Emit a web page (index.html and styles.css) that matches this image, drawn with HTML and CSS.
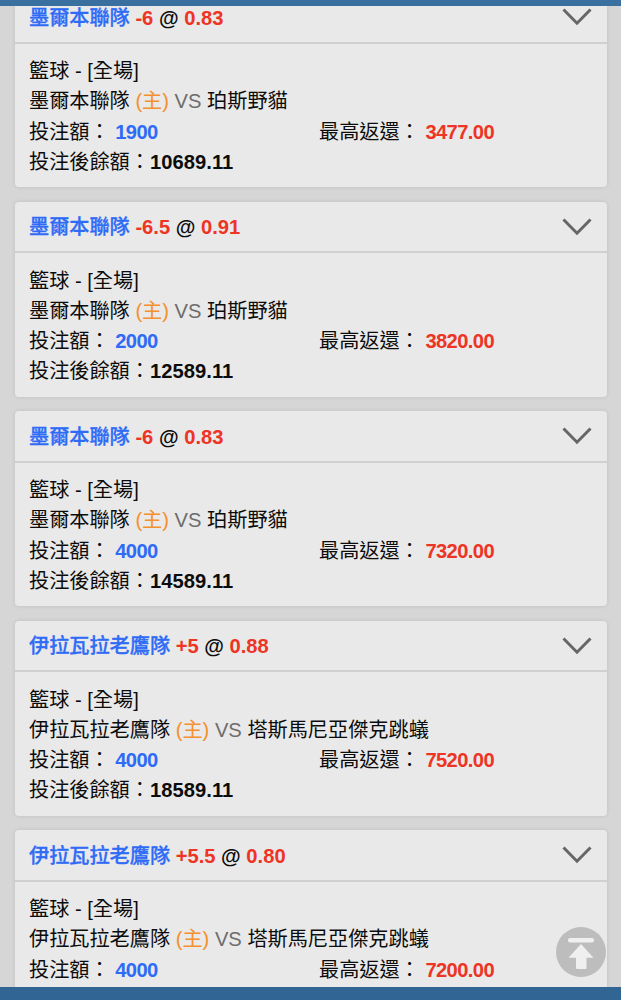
FILE: index.html
```html
<!DOCTYPE html>
<html lang="zh-Hant">
<head>
<meta charset="utf-8">
<title>投注記錄</title>
<link rel="stylesheet" href="styles.css">
</head>
<body>
<div class="app">
  <div class="bar bar-top"></div>
  <main class="list">
    <article class="card">
      <header class="card-head">
        <h2 class="pick"><span class="team">墨爾本聯隊</span> <span class="odds">-6</span> @ <span class="odds">0.83</span></h2>
        <svg class="chevron" viewBox="0 0 30 18"><path d="M1.5 1.5 15 15.2 28.5 1.5"/></svg>
      </header>
      <div class="card-body">
        <p>籃球 - [全場]</p>
        <p>墨爾本聯隊 <span class="home">(主)</span> <span class="vs">VS</span> 珀斯野貓</p>
        <div class="amounts"><p>投注額： <b class="stake">1900</b></p><p>最高返還： <b class="payout">3477.00</b></p></div>
        <p>投注後餘額：<b class="balance">10689.11</b></p>
      </div>
    </article>
    <article class="card">
      <header class="card-head">
        <h2 class="pick"><span class="team">墨爾本聯隊</span> <span class="odds">-6.5</span> @ <span class="odds">0.91</span></h2>
        <svg class="chevron" viewBox="0 0 30 18"><path d="M1.5 1.5 15 15.2 28.5 1.5"/></svg>
      </header>
      <div class="card-body">
        <p>籃球 - [全場]</p>
        <p>墨爾本聯隊 <span class="home">(主)</span> <span class="vs">VS</span> 珀斯野貓</p>
        <div class="amounts"><p>投注額： <b class="stake">2000</b></p><p>最高返還： <b class="payout">3820.00</b></p></div>
        <p>投注後餘額：<b class="balance">12589.11</b></p>
      </div>
    </article>
    <article class="card">
      <header class="card-head">
        <h2 class="pick"><span class="team">墨爾本聯隊</span> <span class="odds">-6</span> @ <span class="odds">0.83</span></h2>
        <svg class="chevron" viewBox="0 0 30 18"><path d="M1.5 1.5 15 15.2 28.5 1.5"/></svg>
      </header>
      <div class="card-body">
        <p>籃球 - [全場]</p>
        <p>墨爾本聯隊 <span class="home">(主)</span> <span class="vs">VS</span> 珀斯野貓</p>
        <div class="amounts"><p>投注額： <b class="stake">4000</b></p><p>最高返還： <b class="payout">7320.00</b></p></div>
        <p>投注後餘額：<b class="balance">14589.11</b></p>
      </div>
    </article>
    <article class="card">
      <header class="card-head">
        <h2 class="pick"><span class="team">伊拉瓦拉老鷹隊</span> <span class="odds">+5</span> @ <span class="odds">0.88</span></h2>
        <svg class="chevron" viewBox="0 0 30 18"><path d="M1.5 1.5 15 15.2 28.5 1.5"/></svg>
      </header>
      <div class="card-body">
        <p>籃球 - [全場]</p>
        <p>伊拉瓦拉老鷹隊 <span class="home">(主)</span> <span class="vs">VS</span> 塔斯馬尼亞傑克跳蟻</p>
        <div class="amounts"><p>投注額： <b class="stake">4000</b></p><p>最高返還： <b class="payout">7520.00</b></p></div>
        <p>投注後餘額：<b class="balance">18589.11</b></p>
      </div>
    </article>
    <article class="card">
      <header class="card-head">
        <h2 class="pick"><span class="team">伊拉瓦拉老鷹隊</span> <span class="odds">+5.5</span> @ <span class="odds">0.80</span></h2>
        <svg class="chevron" viewBox="0 0 30 18"><path d="M1.5 1.5 15 15.2 28.5 1.5"/></svg>
      </header>
      <div class="card-body">
        <p>籃球 - [全場]</p>
        <p>伊拉瓦拉老鷹隊 <span class="home">(主)</span> <span class="vs">VS</span> 塔斯馬尼亞傑克跳蟻</p>
        <div class="amounts"><p>投注額： <b class="stake">4000</b></p><p>最高返還： <b class="payout">7200.00</b></p></div>
      </div>
    </article>
  </main>
  <div class="bar bar-bottom"></div>
  <svg class="to-top" viewBox="0 0 50 50">
    <circle class="to-top-disc" cx="25" cy="25" r="25"/>
    <rect class="to-top-mark" x="12" y="11" width="26" height="4.4" rx="2"/>
    <path class="to-top-mark" d="M25 17 37.5 30.7H30.5V41a1 1 0 0 1-1 1H21a1 1 0 0 1-1-1V30.7H12.5Z"/>
  </svg>
</div>
</body>
</html>
```

FILE: styles.css
```css
* {
  box-sizing: border-box;
}

body {
  margin: 0;
  background: #d6d6d6;
  color: #0c0c0c;
  font-family: "Liberation Sans", "Noto Sans CJK TC", sans-serif;
  font-size: 20.16px;
  line-height: 30.3px;
}

.app {
  position: relative;
  display: flex;
  flex-direction: column;
  height: 1000px;
  overflow: hidden;
}

.bar {
  flex: none;
}

.bar-top {
  height: 6px;
  background: #3a709f;
}

.bar-bottom {
  height: 13px;
  background: #316694;
}

.list {
  flex: 1;
  min-height: 0;
  overflow: hidden;
  display: flex;
  flex-direction: column;
  gap: 14.5px;
  padding: 0 14.5px;
}

.card {
  flex: none;
  height: 195px;
  background: #e9e9e9;
  border-radius: 4px;
  box-shadow: 0 0 4px rgba(0, 0, 0, 0.1);
}

.card:first-child {
  margin-top: -13.6px;
}

.card-head {
  display: flex;
  align-items: center;
  justify-content: space-between;
  height: 51.5px;
  padding: 0 14.5px;
  border-bottom: 2px solid #d0d0d0;
}

.pick {
  margin: 0;
  padding-top: 1px;
  font-size: inherit;
  font-weight: 700;
}

.team {
  color: #2e6bf6;
  font-weight: 500;
  -webkit-text-stroke: 0.3px currentColor;
}

.odds,
.payout {
  color: #ee3424;
}

.chevron {
  width: 30px;
  height: 18px;
  fill: none;
  stroke: #666;
  stroke-width: 3;
}

.card-body {
  padding: 12.1px 14.5px 0;
}

.card-body p {
  margin: 0;
}

.amounts {
  display: grid;
  grid-template-columns: 290px 1fr;
}

.stake {
  color: #2e6bf6;
}

.stake,
.payout {
  letter-spacing: -0.6px;
}

.balance {
  letter-spacing: 0.05px;
}

.home {
  color: #f4902d;
}

.vs {
  color: #6d6d6d;
}

.to-top {
  position: absolute;
  right: 15px;
  bottom: 23.5px;
  width: 50px;
  height: 50px;
}

.to-top-disc {
  fill: #bdbdbd;
}

.to-top-mark {
  fill: #efefef;
}
```
